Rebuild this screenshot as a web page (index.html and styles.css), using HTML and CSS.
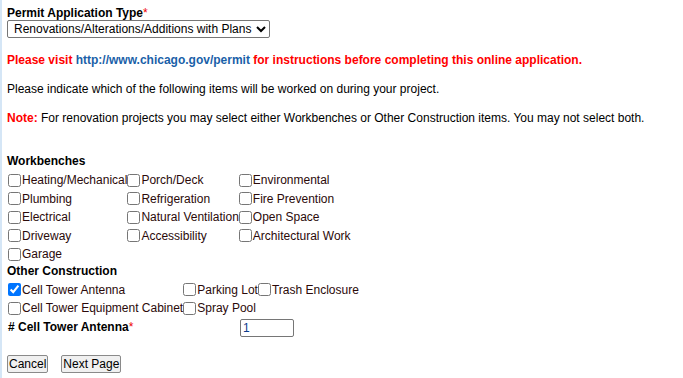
FILE: index.html
```html
<!DOCTYPE html>
<html lang="en">
<head>
<meta charset="UTF-8">
<title>Permit Application</title>
<link rel="stylesheet" href="styles.css">
</head>
<body>

<form class="permit">
  <div class="field-title">Permit Application Type<span class="req">*</span></div>
  <select class="type-select">
    <option>Renovations/Alterations/Additions with Plans</option>
  </select>

  <p class="warn">Please visit <span class="link">http://www.chicago.gov/permit</span> for instructions before completing this online application.</p>
  <p class="info">Please indicate which of the following items will be worked on during your project.</p>
  <p class="info"><span class="note">Note:</span> For renovation projects you may select either Workbenches or Other Construction items. You may not select both.</p>

  <div class="group-title first">Workbenches</div>
  <div class="checks">
    <label><input type="checkbox">Heating/Mechanical</label>
    <label><input type="checkbox">Porch/Deck</label>
    <label><input type="checkbox">Environmental</label>
    <label><input type="checkbox">Plumbing</label>
    <label><input type="checkbox">Refrigeration</label>
    <label><input type="checkbox">Fire Prevention</label>
    <label><input type="checkbox">Electrical</label>
    <label><input type="checkbox">Natural Ventilation</label>
    <label><input type="checkbox">Open Space</label>
    <label><input type="checkbox">Driveway</label>
    <label><input type="checkbox">Accessibility</label>
    <label><input type="checkbox">Architectural Work</label>
    <label><input type="checkbox">Garage</label>
  </div>

  <div class="group-title">Other Construction</div>
  <div class="checks">
    <label><input type="checkbox" checked>Cell Tower Antenna</label>
    <label><input type="checkbox">Parking Lot</label>
    <label><input type="checkbox">Trash Enclosure</label>
    <label><input type="checkbox">Cell Tower Equipment Cabinet</label>
    <label><input type="checkbox">Spray Pool</label>
  </div>

  <div class="count-row">
    <span class="count-label"># Cell Tower Antenna<span class="req">*</span></span>
    <input type="text" class="count-input" value="1">
  </div>

  <div class="actions">
    <button type="button">Cancel</button>
    <button type="button">Next Page</button>
  </div>
</form>

</body>
</html>
```

FILE: styles.css
```css
body {
  margin: 0;
  padding: 0 0 0 7px;
  border-left: 2px solid #d5e6f6;
  min-height: 378px;
  box-sizing: border-box;
  font-family: "Liberation Sans", Arial, sans-serif;
  font-size: 12px;
  color: #000;
}
.permit {
  padding-top: 6px;
}
.field-title {
  font-weight: bold;
  line-height: 14px;
  margin-left: -2px;
}
.req {
  color: #e00;
  font-weight: normal;
}
.type-select {
  display: block;
  margin: 0;
  height: 18px;
  padding: 0 1px 0 2px;
  font-family: "Liberation Sans", Arial, sans-serif;
  font-size: 12px;
  border: 1px solid #767676;
  border-radius: 2px;
  background: #fff;
  color: #000;
  margin-left: -2px;
}
p {
  margin: 15px 0 0 -2px;
  line-height: 14px;
}
.warn {
  color: #f00;
  font-weight: bold;
}
.link {
  color: #1a5fa8;
}
.note {
  color: #f00;
  font-weight: bold;
}
.group-title {
  font-weight: bold;
  line-height: 15px;
  margin: 0 0 2px -2px;
}
.group-title.first {
  margin-top: 29px;
}
.checks {
  display: grid;
  grid-template-columns: repeat(3, auto);
  justify-content: start;
  grid-auto-rows: 18.5px;
  margin-left: -1px;
}
.checks label {
  display: flex;
  align-items: center;
  color: #2b0a0a;
  white-space: nowrap;
}
.checks input {
  flex: none;
  width: 13px;
  height: 13px;
  margin: 0 1px 0 0;
}
.count-row {
  display: grid;
  grid-template-columns: 232px auto;
  align-items: center;
  margin: -1px 0 0 -1px;
  height: 21px;
}
.count-label {
  font-weight: bold;
}
.count-input {
  width: 54px;
  height: 18px;
  box-sizing: border-box;
  margin: 0;
  padding: 0 2px;
  border: 1px solid #767676;
  border-radius: 2px;
  font-family: "Liberation Sans", Arial, sans-serif;
  font-size: 12px;
  color: #0b3b8c;
  position: relative;
  top: 1px;
}
.actions {
  display: flex;
  gap: 13px;
  margin-top: 17px;
  margin-left: -2px;
}
.actions button {
  height: 18px;
  padding: 0 1px;
  font-family: "Liberation Sans", Arial, sans-serif;
  font-size: 12px;
  color: #000;
  background: #f0f0f0;
  border: 1px solid #8a8a8a;
  border-radius: 2px;
}
```
